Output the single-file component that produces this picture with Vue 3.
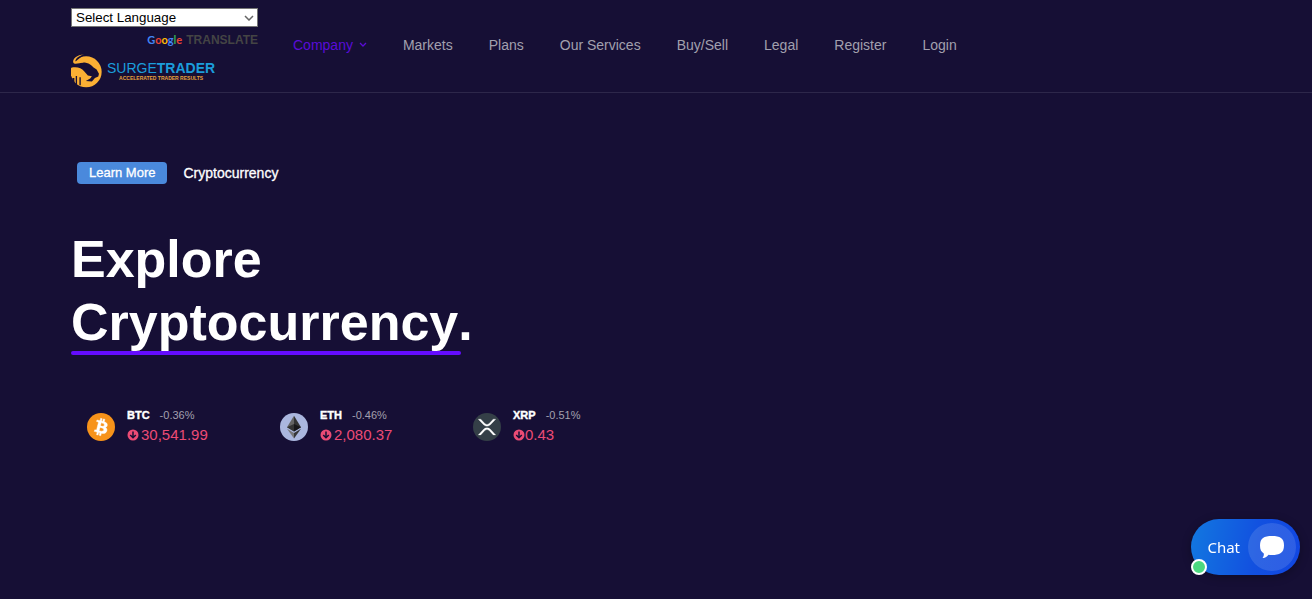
<script setup>
import { ref } from 'vue'

const language = ref('')
const links = ['Markets', 'Plans', 'Our Services', 'Buy/Sell', 'Legal', 'Register', 'Login']
const coins = [
  { symbol: 'BTC', change: '-0.36%', price: '30,541.99', spaced: true },
  { symbol: 'ETH', change: '-0.46%', price: '2,080.37', spaced: true },
  { symbol: 'XRP', change: '-0.51%', price: '0.43', spaced: false },
]
</script>

<template>
  <div class="page">
    <header class="header">
      <div class="brand">
        <div class="language">
          <select v-model="language" aria-label="Select Language">
            <option value="">Select Language</option>
            <option value="en">English</option>
          </select>
          <svg class="caret" viewBox="0 0 10 6" aria-hidden="true">
            <path d="M1 1l4 4 4-4" fill="none" stroke="#666" stroke-width="1.5" />
          </svg>
        </div>
        <a class="translate" href="#">
          <span class="google"><i class="b">G</i><i class="r">o</i><i class="y">o</i><i class="b">g</i><i class="g">l</i><i class="r">e</i></span>
          <span>TRANSLATE</span>
        </a>
        <a class="logo" href="#">
          <svg class="bull" viewBox="18 12 92 99" aria-hidden="true">
            <circle cx="63" cy="64" r="46" fill="#fbb034" />
            <path fill="#160f35" d="M10 10H62C48 20 34 30 30 36C36 40 50 34 62 37C74 40 80 45 84 50L94 57L101 70L99 78L89 82L80 93L62 91L75 84L80 77L68 75L57 62C48 52 34 47 14 53Z" />
            <path fill="#160f35" d="M22 82h6v14h-6zM32 76h4v26h-4zM43 80h4v24h-4zM10 90h18v22H10z" />
            <path fill="#fbb034" d="M57 12C36 14 21 26 25 37C30 44 44 36 56 36L46 32C37 35 31 34 31 31C33 23 43 16 57 12Z" />
          </svg>
          <span class="wordmark">
            <span class="name">SURGE<b>TRADER</b></span>
            <span class="tagline">ACCELERATED TRADER RESULTS</span>
          </span>
        </a>
      </div>
      <nav class="nav">
        <a class="active" href="#">Company
          <svg viewBox="0 0 8 6" aria-hidden="true"><path d="M1 1l3 3 3-3" fill="none" stroke="currentColor" stroke-width="1.3" /></svg>
        </a>
        <a v-for="link in links" :key="link" href="#">{{ link }}</a>
      </nav>
    </header>

    <main class="hero">
      <div class="topic">
        <a class="badge" href="#">Learn More</a>
        <span>Cryptocurrency</span>
      </div>
      <h1>Explore<br><span class="underlined">Cryptocurrency</span>.</h1>
      <ul class="coins">
        <li v-for="coin in coins" :key="coin.symbol">
          <svg v-if="coin.symbol === 'BTC'" class="coin" viewBox="0 0 32 32" aria-hidden="true">
            <circle cx="16" cy="16" r="16" fill="#f7931a" />
            <path fill="#fff" stroke="#fff" stroke-width="0.5" d="M23.189 14.02c.314-2.096-1.283-3.223-3.465-3.975l.708-2.84-1.728-.43-.69 2.765c-.454-.114-.92-.22-1.385-.326l.695-2.783L15.596 6l-.708 2.839c-.376-.086-.746-.17-1.104-.26l.002-.009-2.384-.595-.46 1.846s1.283.294 1.256.312c.7.175.826.638.805 1.006l-.806 3.235c.048.012.11.03.18.057l-.183-.045-1.13 4.532c-.086.212-.303.531-.793.41.018.025-1.256-.313-1.256-.313l-.858 1.978 2.25.561c.418.105.828.215 1.231.318l-.715 2.872 1.727.43.708-2.84c.472.127.93.245 1.378.357l-.706 2.828 1.728.43.715-2.866c2.948.558 5.164.333 6.097-2.333.752-2.146-.037-3.385-1.588-4.192 1.13-.26 1.98-1.003 2.207-2.538zm-3.95 5.538c-.533 2.147-4.148.986-5.32.695l.95-3.805c1.172.293 4.929.872 4.37 3.11zm.535-5.569c-.487 1.953-3.495.96-4.47.717l.86-3.45c.975.243 4.118.696 3.61 2.733z" />
          </svg>
          <svg v-else-if="coin.symbol === 'ETH'" class="coin" viewBox="0 0 32 32" aria-hidden="true">
            <circle cx="16" cy="16" r="16" fill="#abb7df" />
            <path fill="#646464" d="M16 3L8 16.4l8 4.8z" />
            <path fill="#343434" d="M16 3l8 13.4-8 4.8z" />
            <path fill="#343434" d="M16 12.7l-8 3.7 8 4.8z" />
            <path fill="#17171a" d="M16 12.7l8 3.7-8 4.8z" />
            <path fill="#77777a" d="M8 18l8 4.8V29z" />
            <path fill="#37373a" d="M24 18l-8 4.8V29z" />
          </svg>
          <svg v-else class="coin" viewBox="0 0 32 32" aria-hidden="true">
            <circle cx="16" cy="16" r="16" fill="#343f47" />
            <path fill="#fff" stroke="#fff" stroke-width="0.3" d="M23.07 7h2.89l-6.015 6.457a5.621 5.621 0 01-7.89 0L6.035 7H8.93l4.57 5.023a3.556 3.556 0 004.996 0L23.07 7zM8.895 25.063H6l6.055-6.493a5.621 5.621 0 017.89 0L26 25.062h-2.895L18.5 20a3.556 3.556 0 00-4.996 0l-4.61 5.063z" />
          </svg>
          <div class="quote">
            <div class="top"><b>{{ coin.symbol }}</b><span>{{ coin.change }}</span></div>
            <div class="price" :class="{ spaced: coin.spaced }">
              <svg viewBox="0 0 12 12" aria-hidden="true">
                <circle cx="6" cy="6" r="5.5" fill="#ec4b75" />
                <path d="M6 2.5v6M3.2 6L6 8.8 8.8 6" fill="none" stroke="#160f35" stroke-width="1.5" />
              </svg>
              <span>{{ coin.price }}</span>
            </div>
          </div>
        </li>
      </ul>
    </main>

    <button class="chat" type="button">
      <span>Chat</span>
      <span class="bubble">
        <svg viewBox="0 0 24 22" aria-hidden="true">
          <path fill="#fff" d="M12 0C20 0 24 2 24 9.500C24 17 19.500 19 12 19C10.500 19 9.400 18.900 8.500 18.700C7.200 20.700 5.300 21.800 3.200 22C2.600 22 2.500 21.500 3 21.100C3.700 20.300 4 18.900 3.800 17.400C1.200 16 0 13.400 0 9.500C0 2 4 0 12 0Z" />
        </svg>
      </span>
      <span class="status"></span>
    </button>
  </div>
</template>

<style>
html,
body {
  background: #160f35;
}
</style>

<style scoped>
.page {
  min-height: 100vh;
  background: #160f35;
  color: #fff;
  font-family: "Liberation Sans", Arial, sans-serif;
}
a {
  color: inherit;
  text-decoration: none;
}
.header {
  display: flex;
  align-items: flex-start;
  gap: 35px;
  padding: 8px 71px 4px;
  border-bottom: 1px solid #2d274a;
}
.brand {
  width: 187px;
}
.language {
  display: grid;
  align-items: center;
}
.language > * {
  grid-area: 1 / 1;
}
.language select {
  appearance: none;
  box-sizing: border-box;
  width: 100%;
  height: 19px;
  padding: 0 4px;
  border: 1px solid #767676;
  border-radius: 0;
  background: #fff;
  color: #000;
  font-family: inherit;
}
.caret {
  justify-self: end;
  width: 10px;
  height: 6px;
  margin-right: 4px;
  pointer-events: none;
}
.translate {
  display: flex;
  justify-content: flex-end;
  align-items: center;
  gap: 4px;
  height: 25px;
  color: #444;
  font-size: 12px;
  font-weight: bold;
}
.google {
  font-family: Lato, sans-serif;
  font-size: 11px;
}
.google i {
  font-style: normal;
}
.b { color: #4285f4; }
.r { color: #ea4335; }
.y { color: #fbbc05; }
.g { color: #34a853; }
.logo {
  display: flex;
  gap: 5px;
  padding-top: 2px;
}
.bull {
  width: 31px;
  height: 34px;
}
.wordmark {
  display: flex;
  flex-direction: column;
  align-items: center;
  padding-top: 7px;
}
.name {
  color: #1b9ddb;
  font-size: 14px;
  line-height: 15px;
}
.tagline {
  color: #e9a23b;
  font-size: 5px;
  font-weight: bold;
  line-height: 5px;
}
.nav {
  display: flex;
  flex-wrap: wrap;
  gap: 36px;
  padding-top: 28px;
  color: #a2a0ae;
  font-size: 14px;
  line-height: 18px;
}
.nav .active {
  display: flex;
  align-items: center;
  gap: 6px;
  color: #5a0cd8;
}
.nav svg {
  width: 8px;
  height: 6px;
}
.hero {
  padding: 69px 71px 80px;
}
.topic {
  display: flex;
  align-items: center;
  gap: 16px;
  padding-left: 6px;
  font-size: 14px;
  line-height: 22px;
  -webkit-text-stroke: 0.3px currentColor;
}
.badge {
  padding: 0 12px;
  border-radius: 4px;
  background: #4a89dc;
  font-size: 13px;
}
h1 {
  margin: 44px 0 0;
  font-size: 52px;
  line-height: 63px;
}
.underlined {
  position: relative;
}
.underlined::after {
  content: "";
  position: absolute;
  left: 0;
  right: -3px;
  bottom: -4px;
  height: 4px;
  border-radius: 2px;
  background: #640cff;
}
.coins {
  display: grid;
  grid-template-columns: repeat(3, 177px);
  gap: 16px;
  margin: 52px 0 0;
  padding: 0 16px;
  list-style: none;
}
.coins li {
  display: flex;
  align-items: center;
  gap: 12px;
}
.coin {
  width: 28px;
  height: 28px;
  padding-top: 2px;
}
.top {
  display: flex;
  gap: 10px;
  color: #a2a0ae;
  font-size: 11px;
  line-height: 18px;
}
.top b {
  color: #fff;
  -webkit-text-stroke: 0.4px #fff;
}
.price {
  display: flex;
  align-items: center;
  color: #ec4b75;
  font-size: 15px;
  line-height: 22px;
}
.price.spaced {
  gap: 2px;
}
.price svg {
  width: 12px;
  height: 12px;
}
.chat {
  position: fixed;
  right: 12px;
  bottom: 24px;
  display: flex;
  align-items: center;
  gap: 8px;
  height: 56px;
  padding: 0 4px 0 16px;
  border: 0;
  border-radius: 28px;
  background: linear-gradient(100deg, #1278e0, #1250e0 60%, #1146e2);
  box-shadow: 0 2px 10px rgba(0, 0, 0, 0.3);
  color: #fff;
  font-family: "Noto Sans", "Open Sans", sans-serif;
  font-size: 15px;
}
.bubble {
  display: grid;
  place-items: center;
  width: 48px;
  height: 48px;
  border-radius: 50%;
  background: rgba(255, 255, 255, 0.12);
}
.bubble svg {
  width: 24px;
  height: 22px;
}
.status {
  position: absolute;
  left: 0;
  bottom: 0;
  box-sizing: border-box;
  width: 16px;
  height: 16px;
  border: 2px solid #fff;
  border-radius: 50%;
  background: #4cd980;
}
</style>
